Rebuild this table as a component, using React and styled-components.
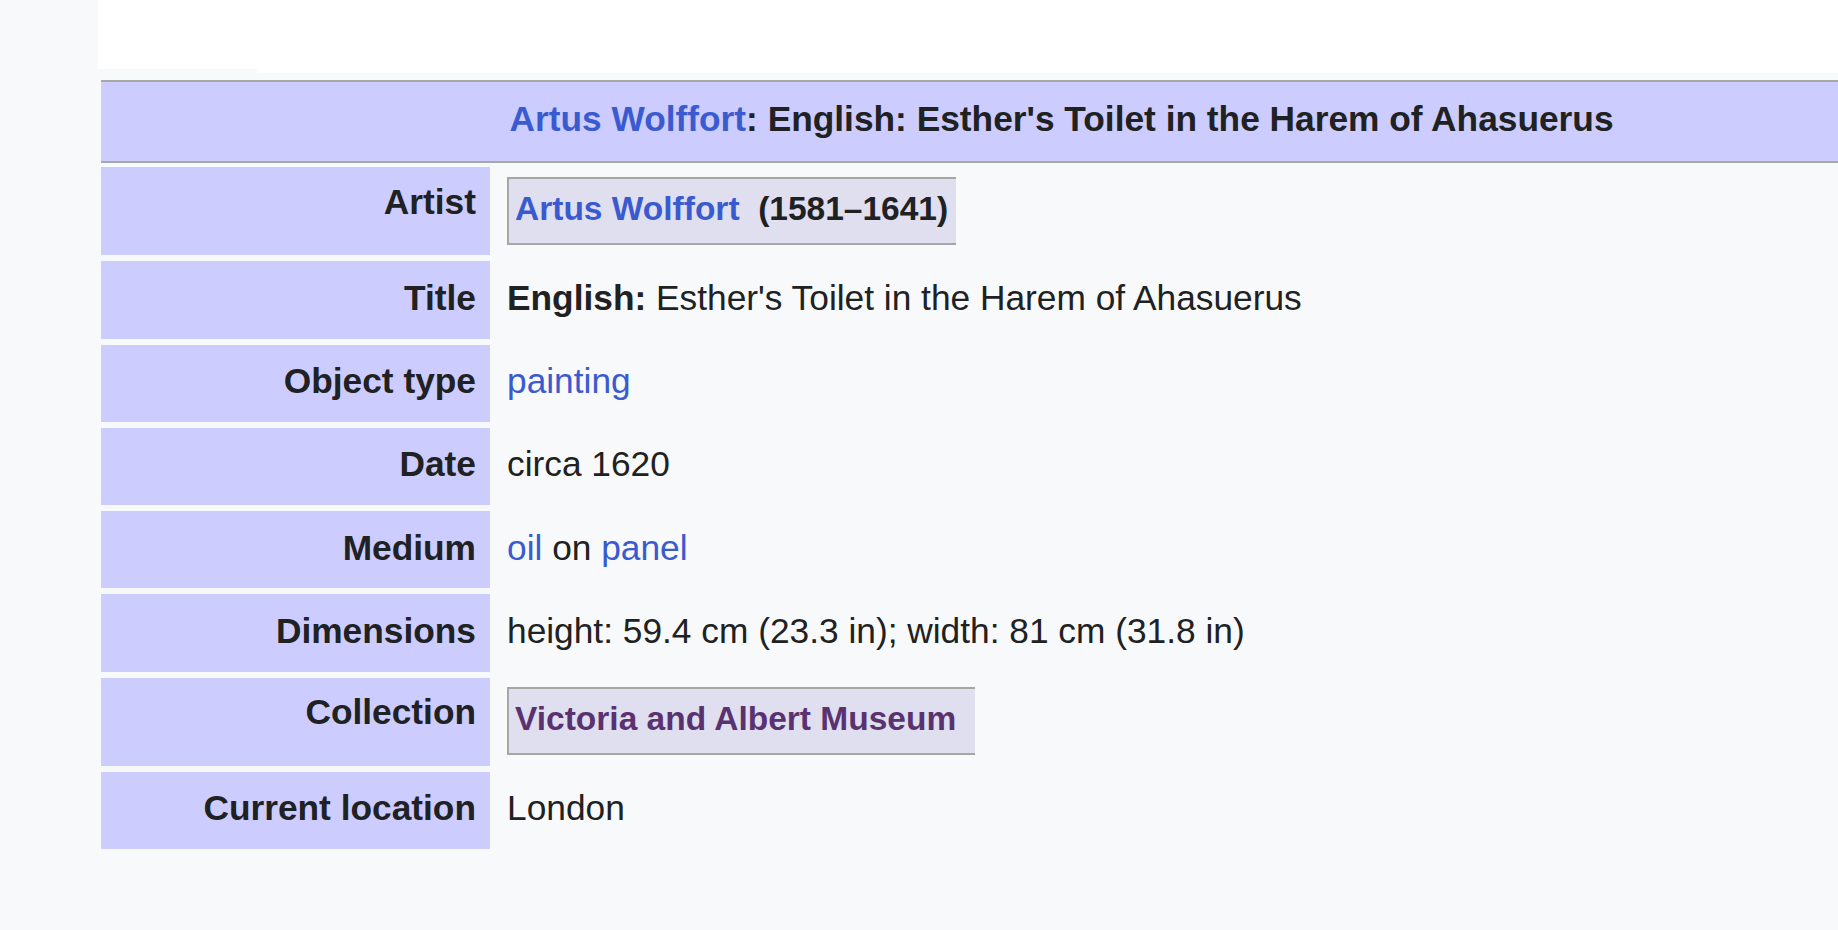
import React from "react";
import styled, { createGlobalStyle } from "styled-components";

const GlobalStyle = createGlobalStyle`
  html, body {
    margin: 0;
    padding: 0;
    background-color: #f8f9fa;
    color: #202122;
    font-family: "Liberation Sans", Arial, sans-serif;
    overflow: hidden;
  }
`;

const Page = styled.div`
  width: 100vw;
  height: 100vh;
  overflow: hidden;
  padding-left: 98px;
  box-sizing: border-box;
`;

const TopBand = styled.div`
  display: flex;
  align-items: flex-start;
  height: 73px;
`;

const WhiteTab = styled.div`
  width: 159px;
  height: 69px;
  background-color: #fff;
`;

const WhiteFill = styled.div`
  flex: 1;
  height: 73px;
  background-color: #fff;
`;

const Sheet = styled.div`
  display: grid;
  grid-template-columns: 389px 1fr;
  column-gap: 6px;
  row-gap: 6px;
  width: 1921px;
  margin: 7px 0 0 3px;
  font-size: 35.3px;
  line-height: 40.25px;
`;

const Header = styled.div`
  grid-column: 1 / -1;
  margin-bottom: -2px;
  padding: 17px 0 22px;
  background-color: #ccf;
  border-top: 2px solid #a8a8a8;
  border-bottom: 2px solid #a8a8a8;
  text-align: center;
  font-weight: bold;
`;

const Label = styled.div`
  padding: ${(p) => (p.$boxed ? "14.5px 14px 18.5px" : "16.5px 14px 20.5px")};
  background-color: #ccf;
  text-align: right;
  font-weight: bold;
  white-space: nowrap;
`;

const Value = styled.div`
  padding: ${(p) => (p.$boxed ? "9.5px 0 10.5px 11px" : "16.5px 0 20.5px 11px")};
  white-space: nowrap;
`;

const Box = styled.span`
  display: inline-block;
  padding: 11px ${(p) => p.$padRight || 8}px 14.5px 6px;
  background-color: #dfdff0;
  border: 2px solid #a6a6a6;
  border-right: none;
  font-size: 33.5px;
  line-height: 38.5px;
  font-weight: bold;
`;

const Link = styled.a`
  color: ${(p) => (p.$visited ? "#5a3270" : "#3a5bd0")};
  text-decoration: none;
  cursor: pointer;
`;

const Strong = styled.b`
  font-weight: bold;
`;

const rows = [
  {
    label: "Artist",
    boxed: true,
    value: (
      <Box>
        <Link>Artus Wolffort</Link>
        {"\u00a0 (1581–1641)"}
      </Box>
    ),
  },
  {
    label: "Title",
    value: (
      <>
        <Strong>English:</Strong> Esther's Toilet in the Harem of Ahasuerus
      </>
    ),
  },
  { label: "Object type", value: <Link>painting</Link> },
  { label: "Date", value: "circa 1620" },
  {
    label: "Medium",
    value: (
      <>
        <Link>oil</Link> on <Link>panel</Link>
      </>
    ),
  },
  {
    label: "Dimensions",
    value: "height: 59.4 cm (23.3 in); width: 81 cm (31.8 in)",
  },
  {
    label: "Collection",
    boxed: true,
    value: (
      <Box $padRight={19}>
        <Link $visited>Victoria and Albert Museum</Link>
      </Box>
    ),
  },
  { label: "Current location", value: "London" },
];

const App = () => {
  return (
    <Page>
      <GlobalStyle />
      <TopBand>
        <WhiteTab />
        <WhiteFill />
      </TopBand>
      <Sheet>
        <Header>
          <Link>Artus Wolffort</Link>: English: Esther's Toilet in the Harem of
          Ahasuerus
        </Header>
        {rows.map((row) => (
          <React.Fragment key={row.label}>
            <Label $boxed={row.boxed}>{row.label}</Label>
            <Value $boxed={row.boxed}>{row.value}</Value>
          </React.Fragment>
        ))}
      </Sheet>
    </Page>
  );
};

export default App;
